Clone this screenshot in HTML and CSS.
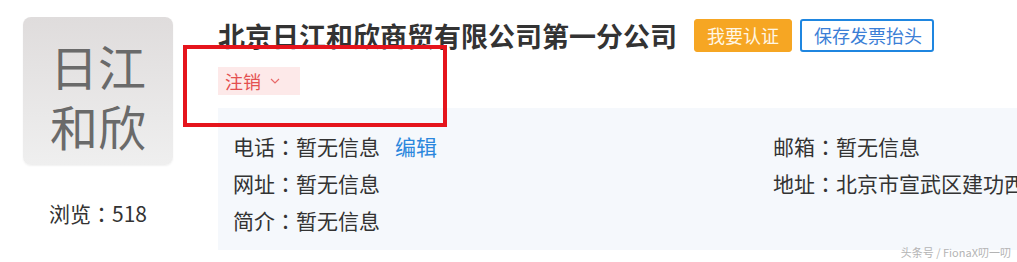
FILE: index.html
```html
<!DOCTYPE html>
<html lang="zh-CN">
<head>
<meta charset="utf-8">
<link rel="stylesheet" href="styles.css">
</head>
<body>
<div class="page">
  <div class="left">
    <div class="logo"><span class="logo-line">日江</span><span class="logo-line">和欣</span></div>
    <div class="views">浏览<span class="colon" lang="zh-TW">：</span>518</div>
  </div>
  <div class="main">
    <div class="title-row">
      <h1 class="title">北京日江和欣商贸有限公司第一分公司</h1>
      <span class="btn btn-orange">我要认证</span>
      <span class="btn btn-blue">保存发票抬头</span>
    </div>
    <div class="tag-row">
      <span class="tag">注销<svg class="chev" width="10" height="6" viewBox="0 0 10 6"><path d="M1 1l4 4 4-4" fill="none" stroke="#e86a6a" stroke-width="1.2"/></svg></span>
    </div>
    <div class="panel">
      <div class="cell">电话<span class="colon" lang="zh-TW">：</span>暂无信息<a class="edit">编辑</a></div>
      <div class="cell">邮箱<span class="colon" lang="zh-TW">：</span>暂无信息</div>
      <div class="cell">网址<span class="colon" lang="zh-TW">：</span>暂无信息</div>
      <div class="cell nowrap">地址<span class="colon" lang="zh-TW">：</span>北京市宣武区建功西里</div>
      <div class="cell">简介<span class="colon" lang="zh-TW">：</span>暂无信息</div>
      <div class="cell"></div>
    </div>
  </div>
  <div class="highlight"></div>
  <div class="watermark">头条号 / FionaX叨一叨</div>
</div>
</body>
</html>
```
FILE: styles.css
```css
html, body {
  margin: 0;
  padding: 0;
  background: #fff;
  overflow: hidden;
}
.page {
  position: relative;
  width: 1017px;
  height: 262px;
  display: flex;
  font-family: "Noto Sans CJK SC", "Noto Sans", sans-serif;
  color: #333;
  overflow: hidden;
}
.colon {
  font-family: "Noto Sans CJK TC", "Noto Sans CJK SC", sans-serif;
}
.left {
  width: 150px;
  padding: 17px 0 0 23px;
  display: flex;
  flex-direction: column;
  align-items: center;
}
.logo {
  width: 150px;
  height: 148px;
  box-sizing: border-box;
  padding-top: 8px;
  border-radius: 8px;
  background: linear-gradient(180deg, #dfdcdc 0%, #efefef 100%);
  box-shadow: 0 1px 2px rgba(0,0,0,0.06);
  display: flex;
  flex-direction: column;
  align-items: center;
  justify-content: center;
  color: #6a6a6a;
  font-size: 48px;
  line-height: 60px;
}
.logo-line { display: block; height: 60px; }
.views {
  margin-top: 35px;
  font-size: 21px;
  line-height: 26px;
  color: #333;
}
.main {
  margin-left: 45px;
  flex: 1;
  padding-top: 19px;
  display: flex;
  flex-direction: column;
  min-width: 0;
}
.title-row {
  display: flex;
  align-items: center;
  height: 33px;
}
.title {
  margin: 0 17px 0 0;
  font-size: 27px;
  font-weight: 700;
  color: #333;
  line-height: 33px;
  white-space: nowrap;
}
.btn {
  box-sizing: border-box;
  height: 33px;
  line-height: 31px;
  font-size: 18px;
  padding: 0 12px;
  border-radius: 3px;
  white-space: nowrap;
}
.btn-orange {
  background: #f6a623;
  border: 1px solid #f6a623;
  color: #fff6e4;
  width: 98px;
  text-align: center;
}
.btn-blue {
  margin-left: 8px;
  border: 2px solid #1f86e0;
  line-height: 29px;
  color: #3b7ed6;
  background: #fff;
  width: 134px;
  text-align: center;
}
.tag-row {
  margin-top: 15px;
  height: 28px;
  display: flex;
}
.tag {
  display: flex;
  align-items: center;
  width: 82px;
  height: 28px;
  box-sizing: border-box;
  padding-left: 7px;
  background: #fde9e9;
  color: #e45050;
  font-size: 18px;
}
.chev { margin-left: 9px; }
.panel {
  margin-top: 13px;
  height: 142px;
  box-sizing: border-box;
  margin-right: -40px;
  padding: 20px 0 0 15px;
  background: #f5f8fc;
  display: grid;
  grid-template-columns: 540px 1fr;
  grid-auto-rows: 37px;
  font-size: 21px;
  line-height: 37px;
  color: #333;
}
.cell { white-space: nowrap; }
.edit {
  margin-left: 15px;
  color: #2b87dd;
}
.highlight {
  position: absolute;
  left: 183px;
  top: 45px;
  width: 264px;
  height: 82px;
  box-sizing: border-box;
  border: 4px solid #e5141c;
}
.watermark {
  position: absolute;
  right: 6px;
  bottom: 3px;
  font-size: 11px;
  line-height: 14px;
  color: #b4b4b4;
}
```
